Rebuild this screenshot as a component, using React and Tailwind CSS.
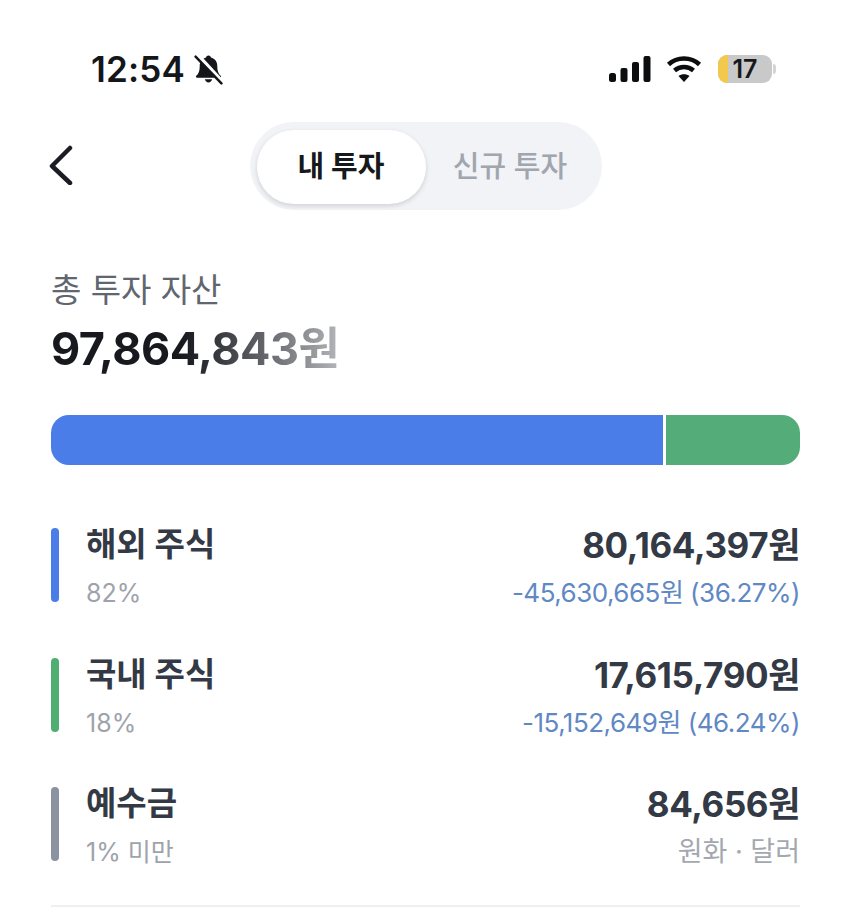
const font = { fontFamily: '"Inter", "Noto Sans CJK KR", sans-serif' };

const rows = [
  { name: "해외 주식", pct: "82%", amount: "80,164,397원", sub: "-45,630,665원 (36.27%)", color: "bg-[#4a7de8]", subColor: "text-[#5f88c4]", subSize: "text-[26px] tracking-[-0.5px]" },
  { name: "국내 주식", pct: "18%", amount: "17,615,790원", sub: "-15,152,649원 (46.24%)", color: "bg-[#4fae72]", subColor: "text-[#5f88c4]", subSize: "text-[26px] tracking-[-0.5px]" },
  { name: "예수금", pct: "1% 미만", amount: "84,656원", sub: "원화 · 달러", color: "bg-[#8b92a0]", subColor: "text-[#a3a8b0]", subSize: "text-[27px]" },
];

// --- Status bar ---
const StatusBar = () => (
  <div className="flex items-center justify-between h-[122px] pl-[91px] pr-[74px] pt-[16px]">
    <div className="flex items-center gap-[8px]">
      <span className="text-[35px] font-semibold text-[#14161a] leading-none tracking-[0.2px]">12:54</span>
      <svg width="31" height="31" viewBox="0 0 30 30" fill="none">
        <path d="M15 1.500c-1.300 0-2.200.9-2.300 2-4 1-6.200 3.800-6.200 8.500 0 4.500-1 6.800-3.500 9.300-.5.9 0 1.700 1 1.700h22c1 0 1.500-.8 1-1.700-2.500-2.500-3.500-4.800-3.500-9.300 0-4.700-2.200-7.500-6.200-8.500-.1-1.100-1-2-2.300-2z" fill="#14161a" />
        <path d="M11.500 24.500c.4 1.800 1.800 3 3.500 3s3.100-1.200 3.500-3z" fill="#14161a" />
        <path d="M4.500 1.500l23 25" stroke="#ffffff" strokeWidth="4.500" />
        <path d="M2.500 2.500l25 26" stroke="#14161a" strokeWidth="2.400" strokeLinecap="round" />
      </svg>
    </div>
    <div className="flex items-center">
      <svg width="42" height="26" viewBox="0 0 42 26" fill="#0c0d0f">
        <rect x="0" y="17" width="7" height="9" rx="2.500" />
        <rect x="11.500" y="12" width="7" height="14" rx="2" />
        <rect x="23" y="6" width="7" height="20" rx="2" />
        <rect x="34.500" y="0" width="7" height="26" rx="2" />
      </svg>
      <svg className="ml-[15px]" width="36" height="28" viewBox="0 0 36 28" fill="none" stroke="#0c0d0f" strokeWidth="4.500">
        <path d="M2.500 9.500C11 1.500 25 1.500 33.500 9.500" />
        <path d="M8.500 15.500c5.500-4.800 13.500-4.800 19 0" />
        <path d="M18 27l-5.500-6c3-2.500 8-2.500 11 0z" fill="#0c0d0f" stroke="none" />
      </svg>
      <div className="ml-[16px] flex items-center">
        <div className="relative w-[54px] h-[28px] rounded-[9px] bg-[#c9c9c9] flex items-center justify-center">
          <div className="absolute left-0 top-0 bottom-0 w-[10px] rounded-l-[9px] bg-[#f2c94c]" />
          <span className="relative text-[25px] font-semibold text-[#17181a] leading-[28px]">17</span>
        </div>
        <div className="ml-[1px] w-[3px] h-[10px] rounded-r-full bg-[#d4d4d4]" />
      </div>
    </div>
  </div>
);

// --- Header with segmented toggle ---
const Header = () => (
  <div className="relative flex justify-center h-[88px] pl-[1px]">
    <svg className="absolute left-[48px] top-[23px]" width="26" height="40" viewBox="0 0 26 40" fill="none">
      <path d="M22 3L4 21l18 17" stroke="#1b1d22" strokeWidth="4.500" strokeLinecap="round" strokeLinejoin="round" />
    </svg>
    <div className="w-[352px] h-[88px] rounded-full bg-[#f1f3f6] flex items-center pl-[7px] pt-[2px]">
      <div className="w-[169px] h-[74px] rounded-full bg-white shadow-[0_2px_5px_rgba(0,0,0,0.14)] flex items-center justify-center text-[29px] font-bold text-[#16181c]">
        내 투자
      </div>
      <div className="flex-1 flex items-center justify-center pr-[7px] text-[29px] font-medium text-[#a0a5ae]">
        신규 투자
      </div>
    </div>
  </div>
);

const AssetRow = ({ row }) => (
  <div className="flex h-[74px]">
    <div className={`w-[8px] h-full rounded-full ${row.color}`} />
    <div className="ml-[27px] flex flex-col justify-between">
      <div className="text-[33px] font-bold text-[#333a45] leading-[36px] -mt-[2px]">{row.name}</div>
      <div className="text-[25px] text-[#9ea3ab] leading-[30px] -mb-[6px]">{row.pct}</div>
    </div>
    <div className="ml-auto flex flex-col justify-between items-end">
      <div className="text-[35px] font-bold text-[#333a45] leading-[36px] tracking-[-0.4px] -mt-[1px]">{row.amount}</div>
      <div className={`leading-[30px] -mb-[6px] ${row.subSize} ${row.subColor}`}>{row.sub}</div>
    </div>
  </div>
);

export default function App() {
  return (
    <div className="w-[850px] h-[912px] bg-white overflow-hidden" style={font}>
      <StatusBar />
      <Header />
      <div className="pl-[51px] pr-[50px]">
        <div className="mt-[61px] text-[33px] text-[#5f6670] leading-[38px]">총 투자 자산</div>
        <div className="mt-[13px] text-[45px] font-bold leading-[54px] tracking-[-0.5px] w-fit text-transparent bg-clip-text bg-gradient-to-r from-[#17191e] from-[45%] to-[#b4b6ba]">
          97,864,843원
        </div>
        <div className="mt-[39px] flex h-[50px] gap-[3px]">
          <div className="w-[612px] rounded-l-[18px] bg-[#4a7de8]" />
          <div className="flex-1 rounded-r-[18px] bg-[#54ad78]" />
        </div>
        <div className="mt-[63px] flex flex-col gap-[55.5px]">
          {rows.map((row) => (
            <AssetRow key={row.name} row={row} />
          ))}
        </div>
        <div className="mt-[44px] h-[2px] bg-[#eeeff1]" />
      </div>
    </div>
  );
}
